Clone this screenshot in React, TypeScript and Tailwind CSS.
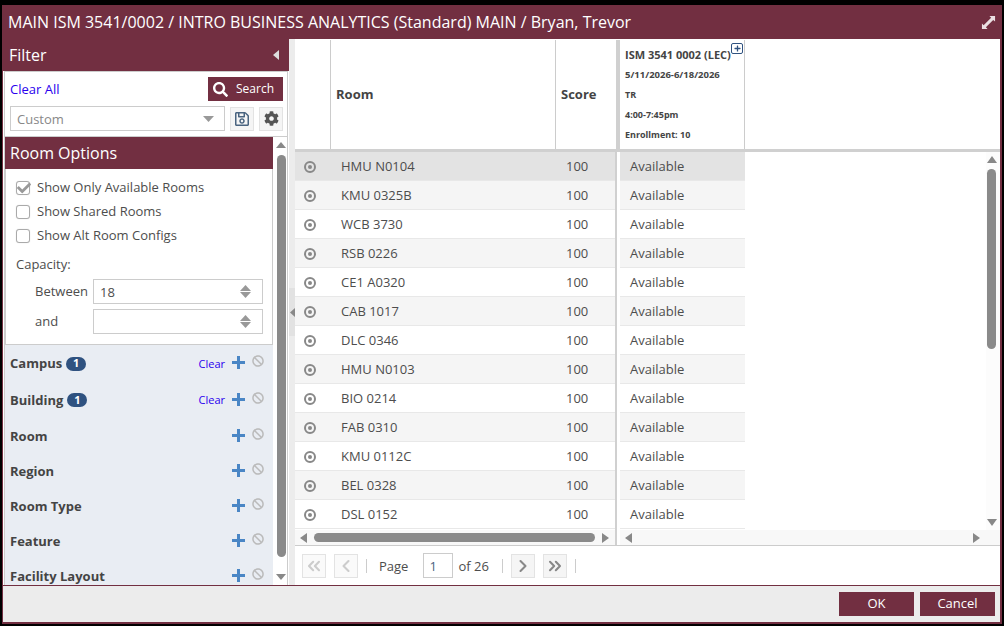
import { FaSearch, FaRegSave, FaCog, FaPlus, FaBan, FaCheck } from "react-icons/fa";
import { ChevronLeft, ChevronRight, ChevronsLeft, ChevronsRight } from "lucide-react";

const rooms = ["HMU N0104", "KMU 0325B", "WCB 3730", "RSB 0226", "CE1 A0320", "CAB 1017", "DLC 0346", "HMU N0103", "BIO 0214", "FAB 0310", "KMU 0112C", "BEL 0328", "DSL 0152"];

const filters = [
    { name: "Campus", count: 1, height: "h-[35px]" },
    { name: "Building", count: 1, height: "h-[38px]" },
    { name: "Room", height: "h-[35px]" },
    { name: "Region", height: "h-[35px]" },
    { name: "Room Type", height: "h-[35px]" },
    { name: "Feature", height: "h-[35px]" },
    { name: "Facility Layout", height: "h-[35px]" },
];

function Caret({ dir, className }: { dir: "up" | "down" | "left" | "right"; className?: string }) {
    const points = {
        up: "0,8 5,0 10,8",
        down: "0,0 10,0 5,8",
        left: "8,0 8,10 0,5",
        right: "0,0 8,5 0,10",
    }[dir];
    const size = dir === "up" || dir === "down" ? "0 0 10 8" : "0 0 8 10";
    return (
        <svg viewBox={size} className={className} fill="currentColor" preserveAspectRatio="none">
            <polygon points={points} />
        </svg>
    );
}

function Spinner() {
    return (
        <div className="flex flex-col gap-[1px] text-[#999]">
            <Caret dir="up" className="w-[11px] h-[6px]" />
            <Caret dir="down" className="w-[11px] h-[6px]" />
        </div>
    );
}

function Check({ label, checked }: { label: string; checked?: boolean }) {
    return (
        <div className="flex items-center h-[24px] gap-[7px]">
            <div className="relative w-[14px] h-[14px] border border-[#aaa] rounded-[3px] bg-white shadow-[0_0_1px_#ccc]">
                {checked && <FaCheck className="absolute left-[0px] -top-[1px] text-[#999]" size={14} />}
            </div>
            <span>{label}</span>
        </div>
    );
}

function FilterRow({ name, count, height }: { name: string; count?: number; height: string }) {
    return (
        <div className={`flex items-center ${height} pl-[5px] pr-[9px]`}>
            <span className={`font-bold text-[#444] ${name === "Building" ? "pt-[2px]" : ""}`}>{name}</span>
            {count && <span className="ml-[4px] w-[20px] h-[14px] rounded-full bg-[#2f5280] text-white text-[11px] font-bold flex items-center justify-center">{count}</span>}
            <div className="flex-1" />
            {count && <span className="text-[11px] text-[#2a00ee] mr-[7px] pt-[1px]">Clear</span>}
            <svg viewBox="0 0 13 13" className="w-[13px] h-[13px] text-[#4a86c5] mr-[7px] -mt-[2px]" fill="currentColor">
                <path d="M5 0h3v5h5v3H8v5H5V8H0V5h5z" />
            </svg>
            <FaBan className="text-[#bbb] -mt-[5px]" size={12} />
        </div>
    );
}

function PagerButton({ children, disabled }: { children: React.ReactNode; disabled?: boolean }) {
    return (
        <div className={`w-[24px] h-[24px] border border-[#e3e3e3] flex items-center justify-center ${disabled ? "bg-[#fafafa] text-[#ccc]" : "bg-[#f5f5f5] text-[#888]"}`}>
            {children}
        </div>
    );
}

export default function App() {
    return (
        <div className="w-[1004px] h-[626px] bg-black pt-[5px] pl-[2px] pr-[2px] pb-[2px] text-[13px] text-[#4d4d4d] overflow-hidden" style={{ fontFamily: '"Open Sans", sans-serif' }}>
            <div className="h-full bg-[#722f41] flex flex-col pl-[1px] pr-[2px] pb-[2px]">
                <div className="h-[34px] shrink-0 flex items-center justify-between pl-[5px] pr-[4px] text-white text-[16px]">
                    <span>MAIN ISM 3541/0002 / INTRO BUSINESS ANALYTICS (Standard) MAIN / Bryan, Trevor</span>
                    <svg viewBox="0 0 16 16" className="w-[15px] h-[15px] text-[#eadfe2]" fill="currentColor">
                        <polygon points="9,1 15,1 15,7 13,5.2 5.2,13 7,15 1,15 1,9 2.8,10.8 10.8,2.8" />
                    </svg>
                </div>

                <div className="flex-1 flex min-h-0 bg-white">
                    {/* filter panel */}
                    <div className="w-[286px] shrink-0 flex flex-col bg-white">
                        <div className="h-[32px] shrink-0 bg-[#722f41] flex items-center justify-between pl-[6px] pr-[10px] text-white text-[16px]">
                            <span>Filter</span>
                            <Caret dir="left" className="w-[6px] h-[10px] text-[#ddd]" />
                        </div>
                        <div className="h-[65px] shrink-0 mx-[1px] border-x border-t border-[#ccc] pl-[5px] pr-[4px]">
                            <div className="flex items-center justify-between pt-[5px] h-[29px]">
                                <span className="text-[#2a00ee] pt-[2px]">Clear All</span>
                                <div className="w-[75px] h-[24px] bg-[#722f41] text-white text-[12px] flex items-center gap-[8px] pl-[5px]">
                                    <FaSearch size={15} />
                                    <span>Search</span>
                                </div>
                            </div>
                            <div className="flex items-center mt-[5px]">
                                <div className="w-[215px] h-[25px] border border-[#ccc] flex items-center justify-between pl-[6px] pr-[10px] text-[#888]">
                                    <span className="pt-[2px]">Custom</span>
                                    <Caret dir="down" className="w-[11px] h-[6px] text-[#999]" />
                                </div>
                                <div className="ml-[5px] w-[24px] h-[24px] border border-[#e3e3e3] bg-[#f5f5f5] flex items-center justify-center text-[#4a6480]">
                                    <FaRegSave size={16} />
                                </div>
                                <div className="ml-[5px] w-[24px] h-[24px] border border-[#e3e3e3] bg-[#f5f5f5] flex items-center justify-center text-[#555]">
                                    <FaCog size={15} />
                                </div>
                            </div>
                        </div>
                        <div className="flex-1 min-h-0 flex border-t border-[#ccc] mx-[1px] border-l pr-[1px] border-r overflow-hidden">
                            <div className="w-[268px] shrink-0 flex flex-col">
                                <div className="h-[32px] shrink-0 bg-[#722f41] flex items-center pl-[5px] text-white text-[16px]">Room Options</div>
                                <div className="h-[176px] shrink-0 border border-t-0 border-[#ccc] pl-[10px] pt-[7px]">
                                    <Check label="Show Only Available Rooms" checked />
                                    <Check label="Show Shared Rooms" />
                                    <Check label="Show Alt Room Configs" />
                                    <div className="mt-[7px] h-[20px] flex items-center">Capacity:</div>
                                    <div className="flex items-center mt-[4px] pl-[19px]">
                                        <span className="w-[58px]">Between</span>
                                        <div className="w-[170px] h-[25px] border border-[#ccc] flex items-center justify-between pl-[6px] pr-[11px]">
                                            <span className="pt-[2px]">18</span>
                                            <Spinner />
                                        </div>
                                    </div>
                                    <div className="flex items-center mt-[5px] pl-[19px]">
                                        <span className="w-[58px]">and</span>
                                        <div className="w-[170px] h-[25px] border border-[#ccc] flex items-center justify-end pr-[11px]">
                                            <Spinner />
                                        </div>
                                    </div>
                                </div>
                                <div className="flex-1 bg-[#e9edf3] pt-[1px] overflow-hidden">
                                    {filters.map((f) => (
                                        <FilterRow key={f.name} name={f.name} count={f.count} height={f.height} />
                                    ))}
                                </div>
                            </div>
                            <div className="w-[14px] shrink-0 flex flex-col items-center text-[#888] pt-[5px] pb-[5px] ml-[1px]">
                                <Caret dir="up" className="w-[10px] h-[6px] shrink-0" />
                                <div className="w-[9px] flex-1 bg-[#8a8a8a] rounded-full mt-[7px] mb-[17px]" />
                                <Caret dir="down" className="w-[10px] h-[6px] shrink-0" />
                            </div>
                        </div>
                    </div>

                    {/* splitter */}
                    <div className="w-[6px] shrink-0 bg-[#ececec] flex items-center">
                        <div className="w-[6px] h-[48px] bg-[#e2e2e2] flex items-center justify-center">
                            <Caret dir="left" className="w-[5px] h-[9px] text-[#888]" />
                        </div>
                    </div>

                    {/* results */}
                    <div className="flex-1 min-w-0 flex flex-col">
                        <div className="flex-1 min-h-0 flex flex-col border-b border-[#ccc]">
                            <div className="h-[113px] shrink-0 flex border-b-[3px] border-[#d0d0d0] pt-[1px]">
                                <div className="w-[36px] border-r border-[#ccc]" />
                                <div className="w-[225px] border-r border-[#ccc] flex items-center pl-[5px] font-bold text-[#444]">Room</div>
                                <div className="w-[60px] flex items-center pl-[5px] font-bold text-[#444]">Score</div>
                                <div className="w-[4px] bg-[#d0d0d0]" />
                                <div className="relative w-[125px] border-r border-[#ccc] pl-[5px] pt-[5px] text-[9px] font-bold text-[#444] flex flex-col">
                                    <span className="h-[20px] text-[11px] flex items-center whitespace-nowrap">ISM 3541 0002 (LEC)</span>
                                    <span className="h-[20px] text-[9.5px] flex items-center">5/11/2026-6/18/2026</span>
                                    <span className="h-[20px] flex items-center">TR</span>
                                    <span className="h-[20px] flex items-center">4:00-7:45pm</span>
                                    <span className="h-[20px] flex items-center">Enrollment: 10</span>
                                    <div className="absolute right-[1px] top-[3px] w-[12px] h-[11px] border border-[#2f5280] rounded-[2px] flex items-center justify-center text-[#2f5280]">
                                        <FaPlus size={7} />
                                    </div>
                                </div>
                            </div>
                            <div className="flex-1 min-h-0 flex">
                                <div className="w-[320px] shrink-0 flex flex-col">
                                    <div className="flex-1 min-h-0 overflow-hidden">
                                        {rooms.map((room, i) => (
                                            <div key={room} className={`flex items-center h-[29px] pt-[2px] border-b border-[#e8e8e8] ${i === 0 ? "bg-[#e3e3e3]" : i % 2 === 1 ? "bg-[#f5f5f5]" : "bg-white"}`}>
                                                <div className="w-[36px] pl-[9px]">
                                                    <div className="w-[12px] h-[12px] rounded-full border-2 border-[#888] flex items-center justify-center">
                                                        <div className="w-[4px] h-[4px] rounded-full bg-[#888]" />
                                                    </div>
                                                </div>
                                                <div className="w-[225px] pl-[10px]">{room}</div>
                                                <div className="pl-[10px]">100</div>
                                            </div>
                                        ))}
                                    </div>
                                    <div className="h-[15px] shrink-0 flex items-center bg-[#f8f8f8] pl-[5px] pr-[6px] text-[#888]">
                                        <Caret dir="left" className="w-[7px] h-[10px] shrink-0" />
                                        <div className="flex-1 h-[9px] rounded-full bg-[#8a8a8a] mx-[7px]" />
                                        <Caret dir="right" className="w-[7px] h-[10px] shrink-0" />
                                    </div>
                                </div>
                                <div className="w-[2px] shrink-0 bg-[#d0d0d0]" />
                                <div className="w-[3px] shrink-0" />
                                <div className="flex-1 min-w-0 flex flex-col">
                                    <div className="flex-1 min-h-0 flex">
                                        <div className="w-[125px] shrink-0 overflow-hidden">
                                            {rooms.map((room, i) => (
                                                <div key={room} className={`flex items-center h-[29px] pt-[2px] border-b border-[#e8e8e8] pl-[10px] ${i === 0 ? "bg-[#e3e3e3]" : i % 2 === 1 ? "bg-[#f5f5f5]" : "bg-white"}`}>
                                                    Available
                                                </div>
                                            ))}
                                        </div>
                                        <div className="flex-1" />
                                        <div className="w-[14px] shrink-0 flex flex-col items-center text-[#888] pt-[4px] pb-[4px] pr-[3px] bg-[#fcfcfc]">
                                            <Caret dir="up" className="w-[10px] h-[7px] shrink-0" />
                                            <div className="w-[9px] h-[180px] bg-[#8a8a8a] rounded-full mt-[6px]" />
                                            <div className="flex-1" />
                                            <Caret dir="down" className="w-[10px] h-[7px] shrink-0" />
                                        </div>
                                    </div>
                                    <div className="h-[15px] shrink-0 flex items-center justify-between bg-[#f8f8f8] pl-[5px] pr-[20px] text-[#888]">
                                        <Caret dir="left" className="w-[7px] h-[10px]" />
                                        <Caret dir="right" className="w-[7px] h-[10px]" />
                                    </div>
                                </div>
                            </div>
                        </div>
                        <div className="h-[39px] shrink-0 flex items-center pl-[7px] text-[13px]">
                            <PagerButton disabled><ChevronsLeft size={20} strokeWidth={2.5} /></PagerButton>
                            <div className="ml-[8px]"><PagerButton disabled><ChevronLeft size={20} strokeWidth={2.5} /></PagerButton></div>
                            <div className="w-px h-[14px] bg-[#ccc] ml-[8px]" />
                            <span className="ml-[12px] pt-[2px]">Page</span>
                            <div className="ml-[15px] w-[30px] h-[25px] border border-[#ccc] flex items-center pl-[5px] pt-[2px] text-[#4a6480]">1</div>
                            <span className="ml-[5px] pt-[2px]">of 26</span>
                            <div className="w-px h-[14px] bg-[#ccc] ml-[13px]" />
                            <div className="ml-[8px]"><PagerButton><ChevronRight size={20} strokeWidth={2.5} /></PagerButton></div>
                            <div className="ml-[8px]"><PagerButton><ChevronsRight size={20} strokeWidth={2.5} /></PagerButton></div>
                            <div className="w-px h-[14px] bg-[#ccc] ml-[8px]" />
                        </div>
                    </div>
                </div>

                <div className="h-[36px] shrink-0 mt-[1px] bg-[#ececec] flex items-center justify-end gap-[6px] pr-[5px] text-white">
                    <div className="w-[75px] h-[24px] bg-[#722f41] flex items-center justify-center">OK</div>
                    <div className="w-[75px] h-[24px] bg-[#722f41] flex items-center justify-center">Cancel</div>
                </div>
            </div>
        </div>
    );
}
